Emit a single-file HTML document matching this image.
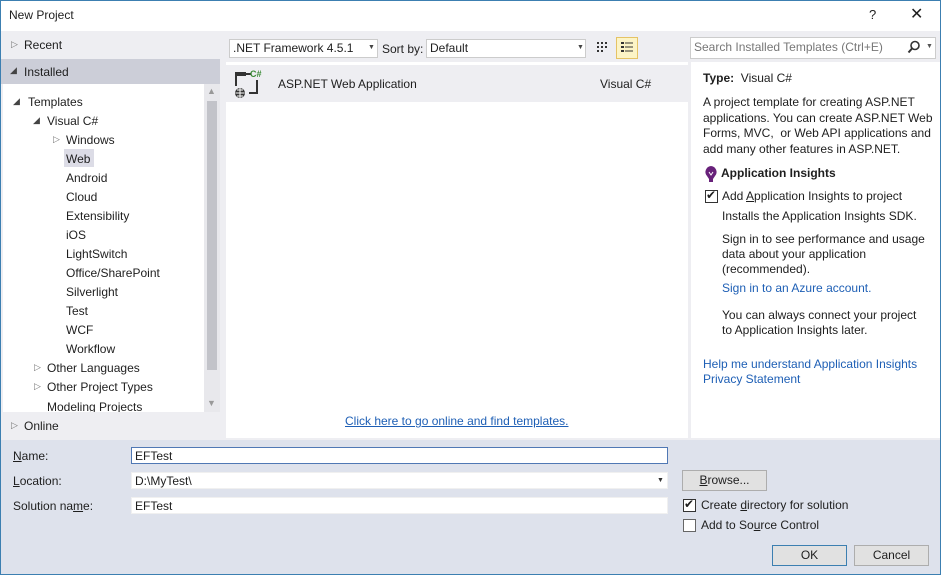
<!DOCTYPE html>
<html><head><style>
*{margin:0;padding:0;box-sizing:border-box}
body{width:941px;height:575px;position:relative;overflow:hidden;font-family:"Liberation Sans",sans-serif;font-size:12px;color:#1e1e1e;background:#eeeef2}
.a{position:absolute;white-space:nowrap}
.frame{position:absolute;left:0;top:0;width:941px;height:575px;border:1px solid #3c7fb1;pointer-events:none}
.lnk{color:#1e5fb5}
.box{position:absolute;background:#fff;border:1px solid #e0e0e6;padding:2px 3px;height:18px;line-height:13px}
.cb{position:absolute;width:13px;height:13px;border:1px solid #333;background:#fff}
.btn{position:absolute;height:21px;background:#e1e1e1;border:1px solid #adadad;text-align:center;line-height:19px}
</style></head><body>
<div class="a" style="left:0;top:0;width:941px;height:31px;background:#fff"></div>
<div class="a" style="left:9px;top:8px">New Project</div>
<div class="a" style="left:869px;top:7px;font-size:13px">?</div>
<div class="a" style="left:910px;top:4px;font-size:16px">✕</div>
<div class="a" style="left:1px;top:31px;width:939px;height:409px;background:#eeeef2"></div>
<div class="a" style="left:11px;top:39px;color:#777;font-size:9px">▷</div>
<div class="a" style="left:24px;top:38px">Recent</div>
<div class="a" style="left:1px;top:59px;width:219px;height:25px;background:#ccced8"></div>
<div class="a" style="left:10px;top:65px;color:#444;font-size:9px">◢</div>
<div class="a" style="left:24px;top:65px">Installed</div>
<div class="a" style="left:3px;top:84px;width:201px;height:328px;background:#fff;overflow:hidden">
<div class="a" style="left:10px;top:12px;font-size:9px;color:#444">◢</div><div class="a" style="left:25px;top:11px">Templates</div>
<div class="a" style="left:30px;top:31px;font-size:9px;color:#444">◢</div><div class="a" style="left:44px;top:30px">Visual C#</div>
<div class="a" style="left:50px;top:50px;font-size:9px;color:#777">▷</div><div class="a" style="left:63px;top:49px">Windows</div>
<div class="a" style="left:61px;top:65px;width:30px;height:18px;background:#dcdce6"></div>
<div class="a" style="left:63px;top:68px">Web</div>
<div class="a" style="left:63px;top:87px">Android</div>
<div class="a" style="left:63px;top:106px">Cloud</div>
<div class="a" style="left:63px;top:125px">Extensibility</div>
<div class="a" style="left:63px;top:144px">iOS</div>
<div class="a" style="left:63px;top:163px">LightSwitch</div>
<div class="a" style="left:63px;top:182px">Office/SharePoint</div>
<div class="a" style="left:63px;top:201px">Silverlight</div>
<div class="a" style="left:63px;top:220px">Test</div>
<div class="a" style="left:63px;top:239px">WCF</div>
<div class="a" style="left:63px;top:258px">Workflow</div>
<div class="a" style="left:31px;top:278px;font-size:9px;color:#777">▷</div><div class="a" style="left:44px;top:277px">Other Languages</div>
<div class="a" style="left:31px;top:297px;font-size:9px;color:#777">▷</div><div class="a" style="left:44px;top:296px">Other Project Types</div>
<div class="a" style="left:44px;top:316px">Modeling Projects</div>
</div>
<div class="a" style="left:204px;top:84px;width:16px;height:328px;background:#e8e8ec"></div>
<div class="a" style="left:207px;top:101px;width:10px;height:269px;background:#c2c3c9"></div>
<div class="a" style="left:207px;top:86px;color:#999;font-size:9px">▲</div>
<div class="a" style="left:207px;top:398px;color:#999;font-size:9px">▼</div>
<div class="a" style="left:11px;top:420px;color:#777;font-size:9px">▷</div>
<div class="a" style="left:24px;top:419px">Online</div>
<div class="box" style="left:229px;top:39px;width:149px;height:19px;border-color:#ccc"> .NET Framework 4.5.1</div>
<div class="a" style="left:368px;top:44px;font-size:7px;color:#444">▼</div>
<div class="a" style="left:382px;top:42px">Sort by:</div>
<div class="box" style="left:426px;top:39px;width:160px;height:19px;border-color:#ccc">Default</div>
<div class="a" style="left:577px;top:44px;font-size:7px;color:#444">▼</div>
<svg class="a" style="left:595px;top:40px" width="16" height="16"><g fill="#333"><rect x="2" y="2" width="2" height="2"/><rect x="6" y="2" width="2" height="2"/><rect x="10" y="2" width="2" height="2"/><rect x="2" y="6" width="2" height="2"/><rect x="6" y="6" width="2" height="2"/><rect x="10" y="6" width="2" height="2"/><rect x="2" y="10" width="2" height="2"/><rect x="6" y="10" width="2" height="2"/></g></svg>
<div class="a" style="left:616px;top:37px;width:22px;height:22px;background:#fcf4c6;border:1px solid #e5c365"></div>
<svg class="a" style="left:619px;top:40px" width="16" height="16"><g fill="#333"><rect x="2" y="2" width="3" height="2"/><rect x="6" y="2.5" width="8" height="1"/><rect x="2" y="6" width="3" height="2"/><rect x="6" y="6.5" width="8" height="1"/><rect x="2" y="10" width="3" height="2"/><rect x="6" y="10.5" width="8" height="1"/></g></svg>
<div class="a" style="left:226px;top:62px;width:462px;height:376px;background:#fff"></div>
<div class="a" style="left:226px;top:65px;width:462px;height:37px;background:#eeeef2"></div>
<svg class="a" style="left:233px;top:69px" width="32" height="30"><rect x="2" y="3" width="11" height="4" fill="#333"/><path d="M3 7v10 M13 5h5 M24 11v13h-8" stroke="#333" stroke-width="2" fill="none"/><circle cx="7" cy="24" r="5" fill="#333"/><path d="M2.5 24h9M7 19v10M4 21h6M4 27h6" stroke="#fff" stroke-width="1"/><text x="17" y="8" font-size="9" font-weight="bold" fill="#388a34" font-family="Liberation Sans">C#</text></svg>
<div class="a" style="left:278px;top:77px">ASP.NET Web Application</div>
<div class="a" style="left:600px;top:77px">Visual C#</div>
<div class="a lnk" style="left:345px;top:414px;text-decoration:underline">Click here to go online and find templates.</div>
<div class="box" style="left:690px;top:37px;width:246px;height:22px;color:#777;line-height:15px;border-color:#ccc">Search Installed Templates (Ctrl+E)</div>
<svg class="a" style="left:907px;top:40px" width="14" height="14"><circle cx="8" cy="5.5" r="4" stroke="#333" stroke-width="1.6" fill="none"/><path d="M5 8.5L1.5 12.5" stroke="#333" stroke-width="2"/></svg>
<div class="a" style="left:926px;top:43px;font-size:7px;color:#555">▼</div>
<div class="a" style="left:691px;top:62px;width:249px;height:376px;background:#fff"></div>
<div class="a" style="left:703px;top:71px"><b>Type:</b>&nbsp; Visual C#</div>
<div class="a" style="left:703px;top:95px;line-height:15.5px">A project template for creating ASP.NET<br>applications. You can create ASP.NET Web<br>Forms, MVC,&nbsp; or Web API applications and<br>add many other features in ASP.NET.</div>
<svg class="a" style="left:704px;top:165px" width="14" height="18"><path d="M7 1a6 6 0 0 0-4 10l2 3h4l2-3A6 6 0 0 0 7 1z" fill="#68217a"/><rect x="5" y="14" width="4" height="3" fill="#68217a"/><path d="M5 7l2 3 2-3" stroke="#fff" fill="none"/></svg>
<div class="a" style="left:721px;top:166px;font-weight:bold">Application Insights</div>
<div class="cb" style="left:705px;top:190px"></div><div class="a" style="left:706px;top:188px;font-size:12px">✔</div>
<div class="a" style="left:722px;top:189px">Add <u>A</u>pplication Insights to project</div>
<div class="a" style="left:722px;top:209px">Installs the Application Insights SDK.</div>
<div class="a" style="left:722px;top:232px;line-height:15px">Sign in to see performance and usage<br>data about your application<br>(recommended).</div>
<div class="a lnk" style="left:722px;top:281px">Sign in to an Azure account.</div>
<div class="a" style="left:722px;top:308px;line-height:15px">You can always connect your project<br>to Application Insights later.</div>
<div class="a lnk" style="left:703px;top:357px">Help me understand Application Insights</div>
<div class="a lnk" style="left:703px;top:372px">Privacy Statement</div>
<div class="a" style="left:1px;top:440px;width:939px;height:134px;background:#dee2ec"></div>
<div class="a" style="left:13px;top:449px"><u>N</u>ame:</div>
<div class="a" style="left:13px;top:474px"><u>L</u>ocation:</div>
<div class="a" style="left:13px;top:499px">Solution na<u>m</u>e:</div>
<div class="box" style="left:131px;top:447px;width:537px;height:17px;border-color:#5078b4">EFTest</div>
<div class="box" style="left:131px;top:472px;width:537px;height:17px;border-color:#f0f0f0">D:\MyTest\</div>
<div class="a" style="left:657px;top:477px;font-size:7px;color:#333">▼</div>
<div class="box" style="left:131px;top:497px;width:537px;height:17px;border-color:#f0f0f0">EFTest</div>
<div class="btn" style="left:682px;top:470px;width:85px"><u>B</u>rowse...</div>
<div class="cb" style="left:683px;top:499px"></div><div class="a" style="left:684px;top:497px">✔</div>
<div class="a" style="left:701px;top:498px">Create <u>d</u>irectory for solution</div>
<div class="cb" style="left:683px;top:519px;border-color:#666"></div>
<div class="a" style="left:701px;top:518px">Add to So<u>u</u>rce Control</div>
<div class="btn" style="left:772px;top:545px;width:75px;border-color:#3c7fb1">OK</div>
<div class="btn" style="left:854px;top:545px;width:75px">Cancel</div>
<div class="frame"></div>
</body></html>
